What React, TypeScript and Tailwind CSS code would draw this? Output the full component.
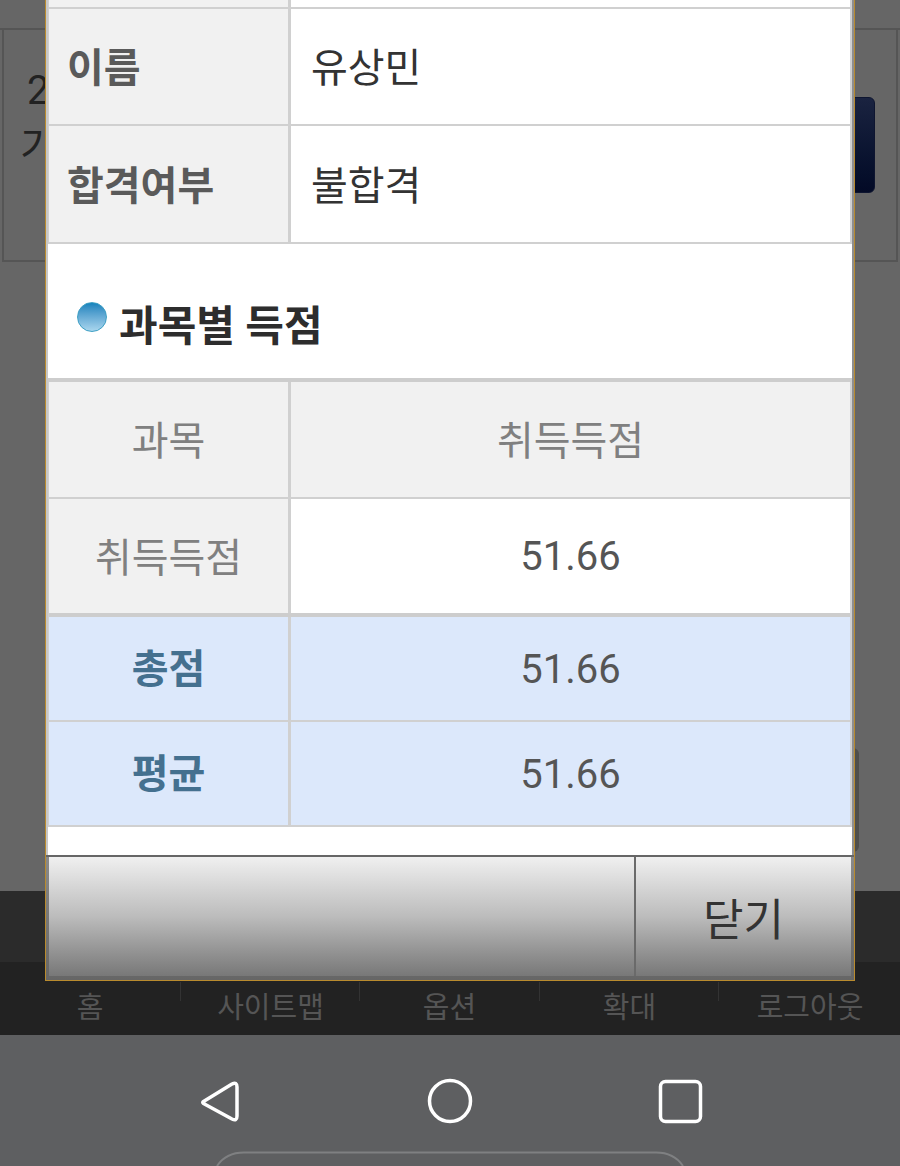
const font = "[font-family:Roboto,'Noto_Sans_CJK_KR',sans-serif]";

function Row({ label, children, labelClass, valueClass, rowClass }: { label: string; children: React.ReactNode; labelClass: string; valueClass: string; rowClass: string }) {
  return (
    <div className={`flex ${rowClass}`}>
      <div className={`w-[239px] shrink-0 flex items-center ${labelClass}`}>{label}</div>
      <div className="w-[3px] shrink-0 bg-[#d0d0d0]" />
      <div className={`flex-1 flex items-center ${valueClass}`}>{children}</div>
    </div>
  );
}

const headLabel = 'bg-[#f1f1f1] pl-[18px] pt-[5px] text-[40px] font-bold text-[#5a5a5a]';
const headValue = 'bg-white pl-[20px] pt-[5px] text-[40px] text-[#333]';
const subLabel = 'bg-[#f1f1f1] justify-center pt-[5px] text-[40px] text-[#808080]';
const blueLabel = 'bg-[#dce8fb] justify-center pt-[2px] text-[40px] font-bold text-[#44708f]';
const blueValue = 'bg-[#dce8fb] justify-center pt-[2px] text-[40px] text-[#555]';

function Modal() {
  return (
    <div className={`absolute left-[45px] top-[-10px] w-[810px] h-[991px] border border-[#b98b2e] bg-white flex flex-col ${font}`}>
      <div className="flex-1 flex flex-col border-l-[2px] border-r-[2px] border-l-[#c8c8c8] border-r-[#8f8f8f]">
        <div className="border-l border-r-[2px] border-[#d0d0d0]">
          <div className="h-[18px] border-b-[2px] border-[#d0d0d0] flex">
            <div className="w-[239px] bg-[#f1f1f1]" />
            <div className="w-[3px] bg-[#d0d0d0]" />
          </div>
          <Row label="이름" labelClass={headLabel} valueClass={headValue} rowClass="h-[117px] border-b-[2px] border-[#d0d0d0]"><span>유상민</span></Row>
          <Row label="합격여부" labelClass={headLabel} valueClass={headValue} rowClass="h-[118px] border-b-[2px] border-[#d0d0d0]"><span>불합격</span></Row>
        </div>
        <div className="h-[134px] flex items-start pl-[29px] pt-[58px] gap-[12px]">
          <span className="w-[30px] h-[30px] rounded-full border border-[#3d9fc4] bg-gradient-to-b from-[#0f83bd] to-[#a9d6ee]" />
          <span className="text-[42px] leading-[48px] mt-[1px] font-bold text-[#2d2d2d]">과목별 득점</span>
        </div>
        <div className="h-[4px] bg-[#cdcdcd]" />
        <div className="border-l border-r-[2px] border-[#d0d0d0]">
          <Row label="과목" labelClass={subLabel} valueClass="bg-[#f1f1f1] justify-center pt-[5px] text-[40px] text-[#808080]" rowClass="h-[117px] border-b-[2px] border-[#d0d0d0]"><span>취득득점</span></Row>
          <Row label="취득득점" labelClass={subLabel} valueClass="bg-white justify-center pt-[2px] text-[40px] text-[#555]" rowClass="h-[114px]"><span>51.66</span></Row>
          <div className="h-[4px] bg-[#cdcdcd]" />
          <Row label="총점" labelClass={blueLabel} valueClass={blueValue} rowClass="h-[105px] border-b-[2px] border-[#d0d0d0]"><span>51.66</span></Row>
          <Row label="평균" labelClass={blueLabel} valueClass={blueValue} rowClass="h-[105px] border-b-[2px] border-[#d0d0d0]"><span>51.66</span></Row>
        </div>
        <div className="h-[28px] shrink-0" />
      </div>
      <div className="h-[125px] shrink-0 flex flex-col">
        <div className="h-[2px] shrink-0 bg-[#666]" />
        <div className="flex-1 flex pl-[3px] pr-[3px] pb-[4px] bg-gradient-to-b from-[#8a8a8a] to-[#666]">
          <div className="w-[585px] bg-gradient-to-b from-[#f0f0f0] via-[#bcbcbc] to-[#787878]" />
          <div className="w-[2px] bg-[#6a6a6a]" />
          <div className="flex-1 flex items-center justify-center pt-[8px] bg-gradient-to-b from-[#f0f0f0] via-[#bcbcbc] to-[#787878] text-[44px] text-[#333]">닫기</div>
        </div>
      </div>
    </div>
  );
}

const tabs = [
  { label: '홈', cls: 'w-[180px]' },
  { label: '사이트맵', cls: 'w-[179px] pl-[2px]' },
  { label: '옵션', cls: 'w-[180px] pl-[1px]' },
  { label: '확대', cls: 'w-[179px] pl-[2px]' },
  { label: '로그아웃', cls: 'w-[182px] pl-[2px]' },
];

export default function App() {
  return (
    <div className={`relative w-[900px] h-[1166px] overflow-hidden flex flex-col bg-[#666] ${font}`}>
      <div className="h-[891px] shrink-0 relative">
        <div className="h-[30px] border-b-[2px] border-[#555]" />
        <div className="h-[232px] mx-[2px] border-x-[2px] border-b-[2px] border-[#555] pl-[23px] pt-[38px] text-[#222] text-[40px] leading-[46px]">
          <div>2</div>
          <div className="-ml-[7px] mt-[10px]">기</div>
        </div>
        <div className="absolute left-[840px] top-[97px] w-[35px] h-[96px] rounded-[6px] border border-[#0e1530] bg-gradient-to-b from-[#1a2340] to-[#030a26]" />
        <div className="absolute left-[840px] top-[748px] w-[19px] h-[104px] rounded-[6px] bg-[#4f4f4c]" />
      </div>
      <div className="h-[71px] shrink-0 bg-[#2b2b2b]" />
      <div className="h-[73px] shrink-0 bg-[#222] flex">
        {tabs.map((t, i) => (
          <div key={t.label} className={`${t.cls} relative flex items-center justify-center pt-[20px] text-[29px] text-[#555]`}>
            {t.label}
            {i > 0 && <span className="absolute left-0 top-[20px] w-px h-[19px] bg-[#333]" />}
          </div>
        ))}
      </div>
      <div className="flex-1 bg-[#5e5f61] relative">
        <svg width="900" height="131" viewBox="0 0 900 131" fill="none" className="block">
          <path d="M203.500 66.500 L232 49 Q237 46.500 237 52 L237 81 Q237 86.500 232 84 L203.500 68.500 Q202 67.500 203.500 66.500 Z" stroke="#fff" strokeWidth="3.500" strokeLinejoin="round" />
          <circle cx="450" cy="66" r="20.500" stroke="#fff" strokeWidth="3.500" />
          <rect x="660.500" y="46.500" width="40" height="40" rx="5" stroke="#fff" strokeWidth="3.500" />
          <path d="M217 131 Q226 117.500 244 117.500 L656 117.500 Q674 117.500 683 131" stroke="#7f8082" strokeWidth="2" />
        </svg>
      </div>
      <Modal />
    </div>
  );
}
